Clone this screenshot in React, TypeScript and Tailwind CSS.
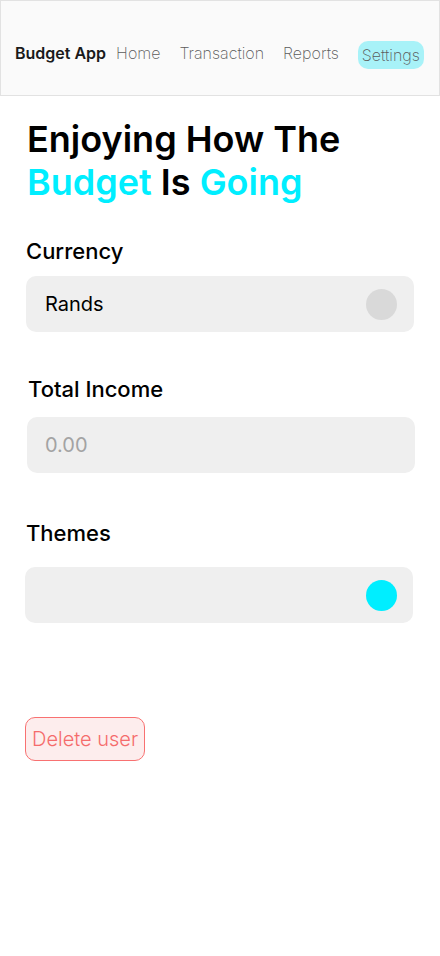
import React from "react";

const font = { fontFamily: "Inter, 'Noto Sans', sans-serif" };

function Field({ label, children, className }: { label: string; children: React.ReactNode; className?: string }) {
  return (
    <div className={className}>
      <h3 className="text-[22px] font-medium leading-[28px] text-black">{label}</h3>
      {children}
    </div>
  );
}

export default function App() {
  return (
    <div className="min-h-[956px] w-[440px] bg-white" style={font}>
      <header className="flex h-[96px] items-center border border-[#e2e2e2] bg-[#fafafa] pl-[14px] pt-[10px]">
        <span className="text-[16px] font-semibold text-[#1a1a1a]">Budget App</span>
        <nav className="ml-[10px] flex items-center gap-[19px] text-[16px] font-extralight text-[#5a5a5a]">
          <a>Home</a>
          <a>Transaction</a>
          <a>Reports</a>
          <a className="mt-[3px] rounded-[10px] bg-[#a8f2f8] px-[4px] py-[4px] leading-5">Settings</a>
        </nav>
      </header>

      <main className="px-[26px]">
        <h1 className="ml-px mt-[22px] text-[36px] font-semibold leading-[43px] text-black">
          Enjoying How The
          <br />
          <span className="text-[#00eeff]">Budget</span> Is <span className="text-[#00eeff]">Going</span>
        </h1>

        <Field label="Currency" className="mt-[33px]">
          <div className="mt-[11px] flex h-[56px] items-center justify-between rounded-[10px] bg-[#efefef] pl-[19px] pr-[17px]">
            <span className="text-[20px] text-black">Rands</span>
            <span className="h-[31px] w-[31px] rounded-full bg-[#d9d9d9]" />
          </div>
        </Field>

        <Field label="Total Income" className="ml-[2px] mr-[-1px] mt-[43px]">
          <div className="-ml-px mt-[14px] flex h-[56px] items-center rounded-[10px] bg-[#efefef] pl-[18px]">
            <span className="text-[20px] text-[#a3a3a3]">0.00</span>
          </div>
        </Field>

        <Field label="Themes" className="mr-px mt-[46px]">
          <div className="-ml-px mt-[20px] flex h-[56px] items-center justify-end rounded-[10px] bg-[#efefef] pr-[16px]">
            <span className="h-[31px] w-[31px] rounded-full bg-[#00eeff]" />
          </div>
        </Field>

        <button className="-ml-px mt-[94px] h-[44px] rounded-[10px] border border-[#f87171] bg-[#fdeded] px-[6px] text-[20px] font-light text-[#f56b6b]">
          Delete user
        </button>
      </main>
    </div>
  );
}
